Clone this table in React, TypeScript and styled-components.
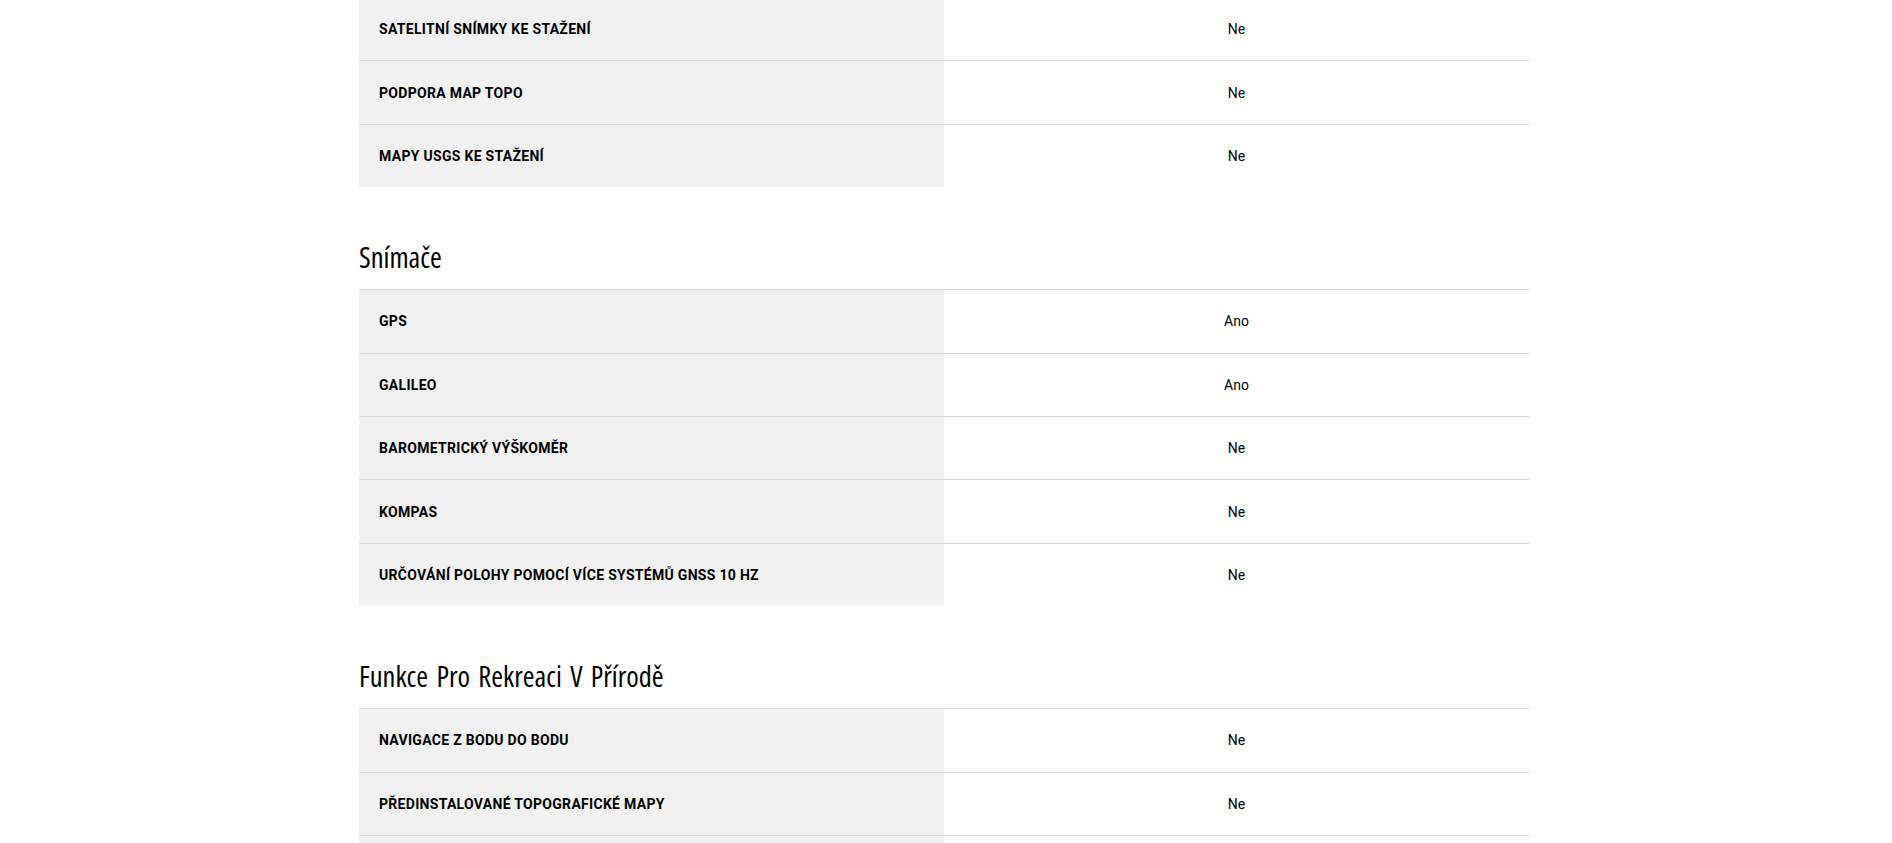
import React from "react";
import styled, { createGlobalStyle } from "styled-components";

const GlobalStyle = createGlobalStyle`
  html, body {
    margin: 0;
    padding: 0;
    background: #ffffff;
  }
  body {
    font-family: Roboto, "Liberation Sans", Arial, sans-serif;
    color: #000000;
    overflow: hidden;
  }
`;

const Page = styled.div`
  width: 1170px;
  margin-left: calc(50% - 587px);
  margin-top: -3px;
`;

const Section = styled.section`
  & + & {
    margin-top: 54px;
  }
`;

const Heading = styled.h2`
  margin: 0;
  padding: 0 0 16px;
  font-family: "Open Sans", sans-serif;
  font-stretch: 75%;
  font-weight: 400;
  font-size: 28.5px;
  line-height: 32px;
  word-spacing: 3px;
  color: #000;
`;

const Table = styled.div`
  display: flex;
  flex-direction: column;
`;

const Row = styled.div`
  display: grid;
  grid-template-columns: 1fr 1fr;
  height: 63.4px;
  box-sizing: border-box;
  border-top: 1px solid #d9d9d9;
`;

const Label = styled.div`
  display: flex;
  align-items: center;
  padding-left: 20px;
  background: #f1f1f1;
  font-size: 14px;
  font-weight: 700;
  letter-spacing: 0.3px;
  text-transform: uppercase;
`;

const Value = styled.div`
  display: flex;
  align-items: center;
  justify-content: center;
  font-size: 14px;
  font-weight: 400;
`;

type Spec = { label: string; value: string };

type Group = { title?: string; rows: Spec[] };

// the last row of the page is scrolled off below the fold, only its top edge shows
const groups: Group[] = [
  {
    rows: [
      { label: "Satelitní snímky ke stažení", value: "Ne" },
      { label: "Podpora map TOPO", value: "Ne" },
      { label: "Mapy USGS ke stažení", value: "Ne" },
    ],
  },
  {
    title: "Snímače",
    rows: [
      { label: "GPS", value: "Ano" },
      { label: "Galileo", value: "Ano" },
      { label: "Barometrický výškoměr", value: "Ne" },
      { label: "Kompas", value: "Ne" },
      { label: "Určování polohy pomocí více systémů GNSS 10 Hz", value: "Ne" },
    ],
  },
  {
    title: "Funkce Pro Rekreaci V Přírodě",
    rows: [
      { label: "Navigace z bodu do bodu", value: "Ne" },
      { label: "Předinstalované topografické mapy", value: "Ne" },
      { label: "", value: "" },
    ],
  },
];

const App: React.FC = () => {
  return (
    <>
      <GlobalStyle />
      <Page>
        {groups.map((group, i) => (
          <Section key={i}>
            {group.title && <Heading>{group.title}</Heading>}
            <Table>
              {group.rows.map((row, j) => (
                <Row key={j}>
                  <Label>{row.label}</Label>
                  <Value>{row.value}</Value>
                </Row>
              ))}
            </Table>
          </Section>
        ))}
      </Page>
    </>
  );
};

export default App;
